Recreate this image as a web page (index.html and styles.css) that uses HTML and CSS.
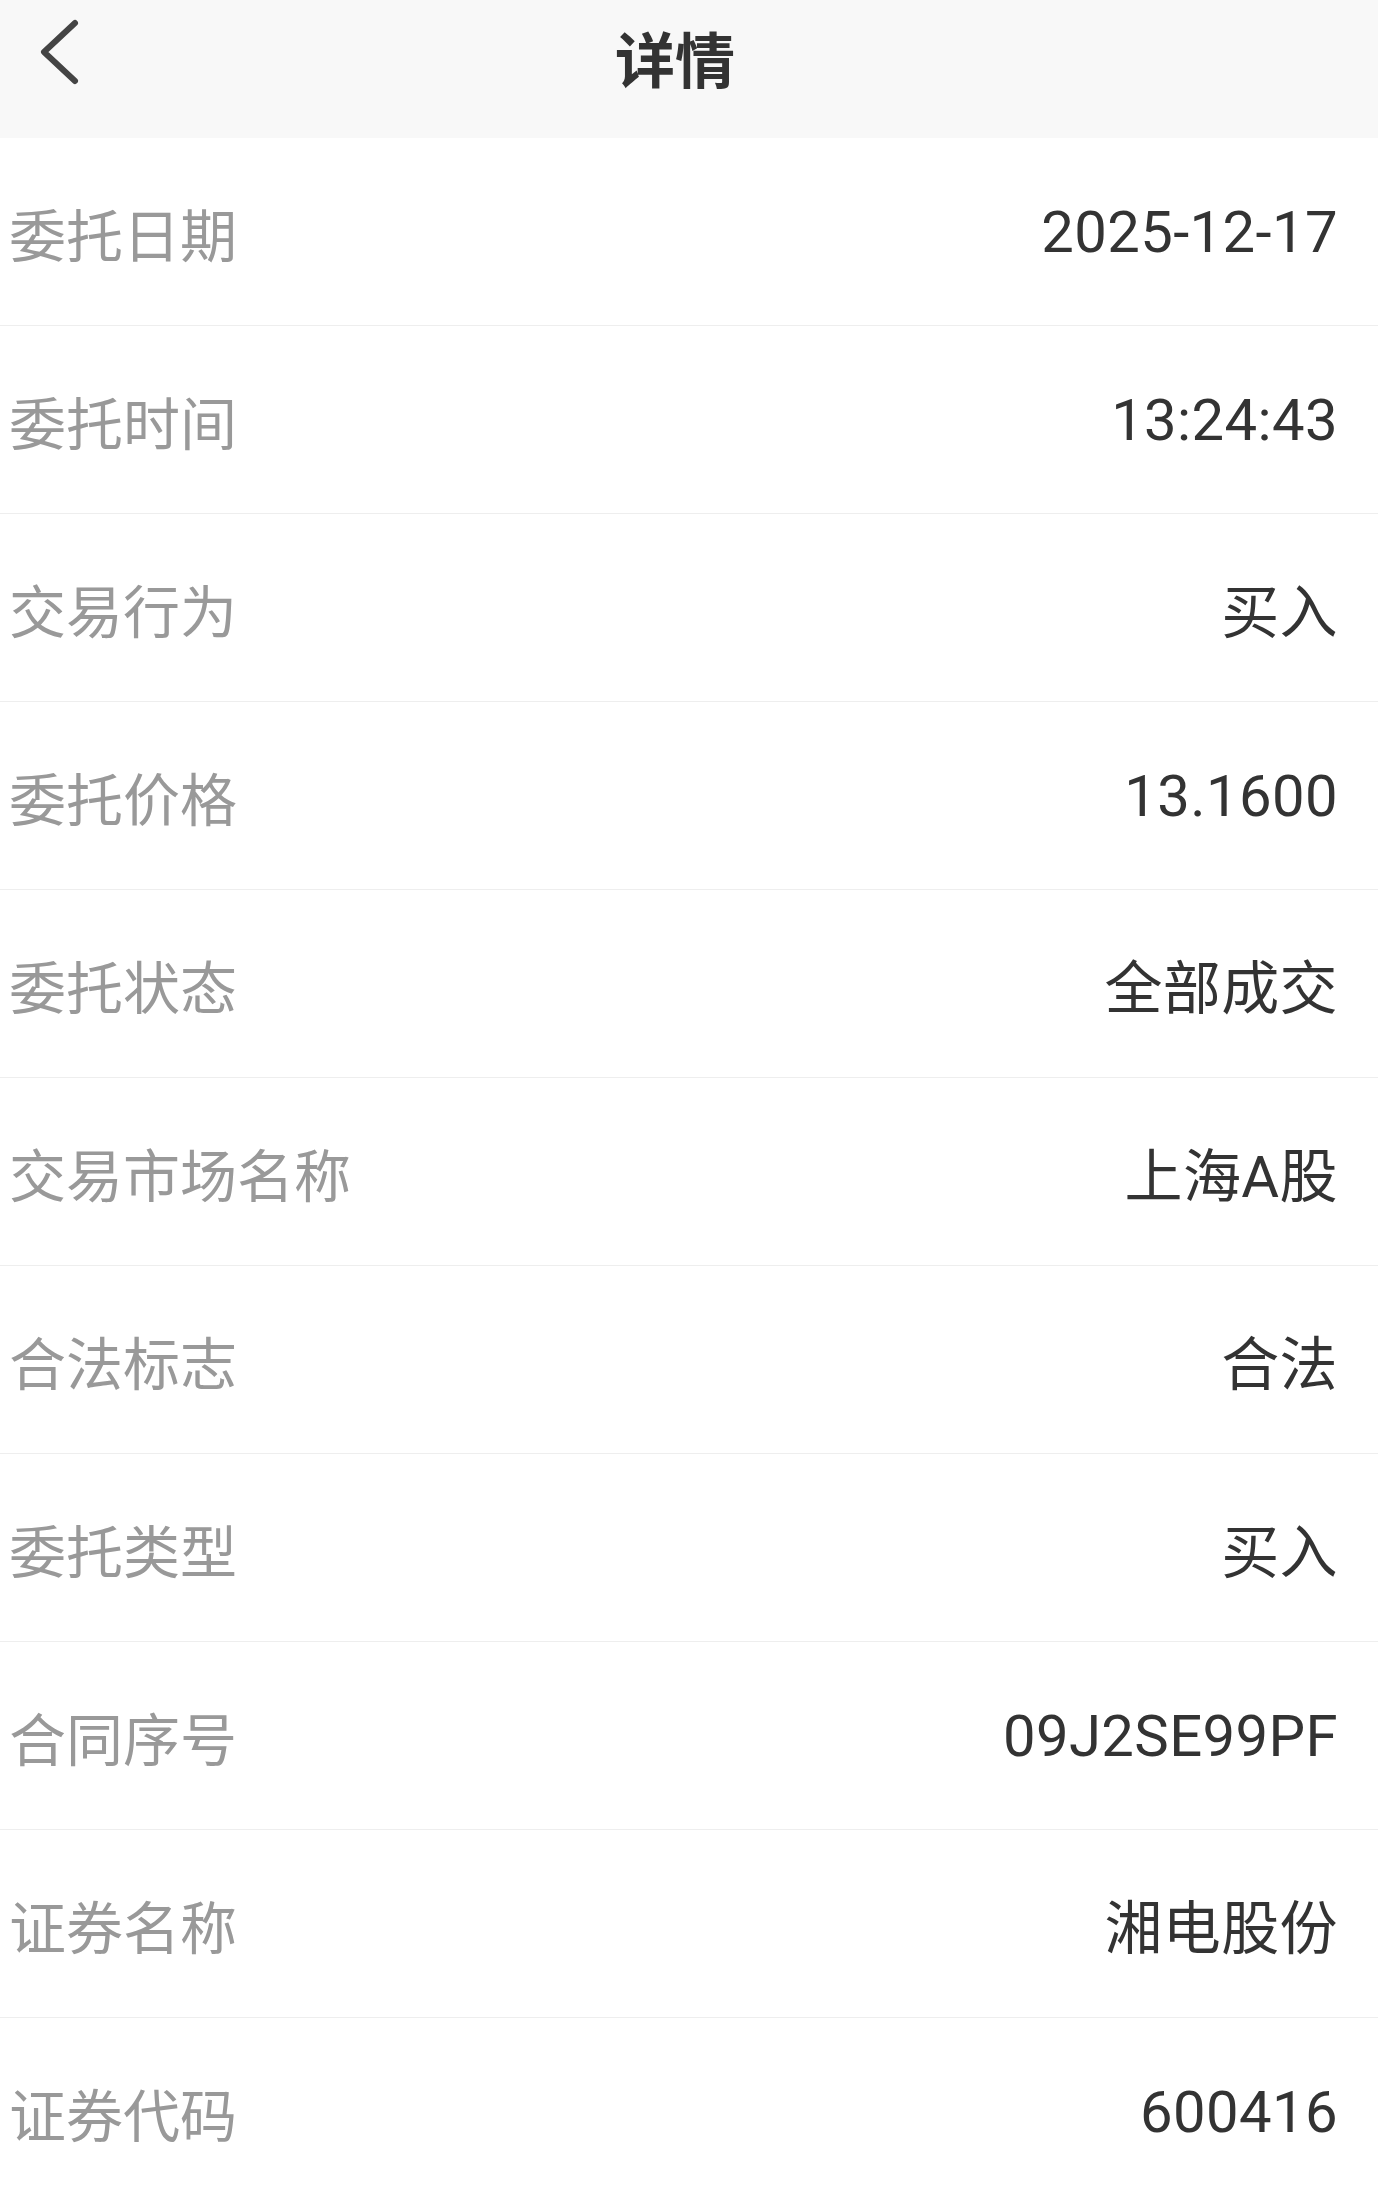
FILE: index.html
```html
<!DOCTYPE html>
<html lang="zh-CN">
<head>
    <meta charset="UTF-8">
    <meta name="viewport" content="width=device-width, initial-scale=1.0">
    <title>详情</title>
    <link rel="stylesheet" href="styles.css">
</head>
<body>
    <div class="header">
        <div class="back">
            <svg width="120" height="114" viewBox="0 0 120 114">
                <polyline points="75,23 44,52 75,81" fill="none" stroke="#444" stroke-width="6" stroke-linecap="round" stroke-linejoin="round"/>
            </svg>
        </div>
        <h1 class="title">详情</h1>
        <div class="side"></div>
    </div>

    <div class="detail-list">
        <div class="row"><span class="label">委托日期</span><span class="value">2025-12-17</span></div>
        <div class="row"><span class="label">委托时间</span><span class="value">13:24:43</span></div>
        <div class="row"><span class="label">交易行为</span><span class="value">买入</span></div>
        <div class="row"><span class="label">委托价格</span><span class="value">13.1600</span></div>
        <div class="row"><span class="label">委托状态</span><span class="value">全部成交</span></div>
        <div class="row"><span class="label">交易市场名称</span><span class="value">上海A股</span></div>
        <div class="row"><span class="label">合法标志</span><span class="value">合法</span></div>
        <div class="row"><span class="label">委托类型</span><span class="value">买入</span></div>
        <div class="row"><span class="label">合同序号</span><span class="value">09J2SE99PF</span></div>
        <div class="row"><span class="label">证券名称</span><span class="value">湘电股份</span></div>
        <div class="row"><span class="label">证券代码</span><span class="value">600416</span></div>
    </div>
</body>
</html>
```

FILE: styles.css
```css
body {
    margin: 0;
    padding: 0;
    background-color: #ffffff;
    font-family: "Noto Sans CJK SC", "Noto Sans", sans-serif;
}
.header {
    display: grid;
    grid-template-columns: 120px 1fr 148px;
    align-items: start;
    height: 138px;
    background-color: #f8f8f8;
}
.back svg {
    display: block;
}
.title {
    margin: 0;
    height: 114px;
    line-height: 114px;
    text-align: center;
    font-size: 60px;
    font-weight: bold;
    color: #333333;
}
.row {
    display: flex;
    justify-content: space-between;
    align-items: center;
    height: 187px;
    padding: 0 40px 0 9px;
    border-bottom: 1px solid #eeeeee;
}
.label {
    font-size: 57px;
    color: #999999;
}
.value {
    font-family: Roboto, "Noto Sans CJK SC", sans-serif;
    font-size: 58px;
    letter-spacing: 0.4px;
    color: #333333;
}
```
